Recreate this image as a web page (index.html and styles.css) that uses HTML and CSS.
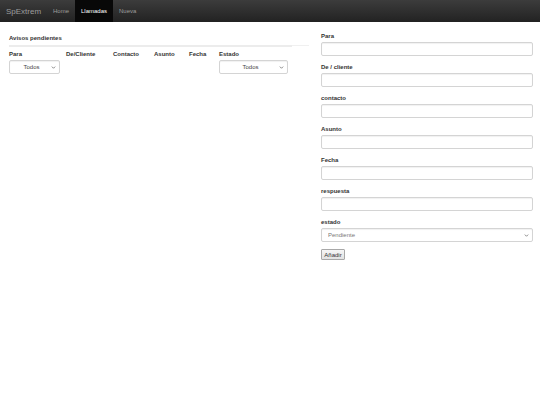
FILE: index.html
```html
<!DOCTYPE html>
<html lang="es">
<head>
<meta charset="utf-8">
<title>SpExtrem - Llamadas</title>
<link rel="stylesheet" href="styles.css">
</head>
<body>
<nav class="navbar">
  <span class="brand">SpExtrem</span>
  <ul class="nav">
    <li><a href="#">Home</a></li>
    <li class="active"><a href="#">Llamadas</a></li>
    <li><a href="#">Nueva</a></li>
  </ul>
</nav>
<main class="page">
  <section class="list">
    <div class="list-title">Avisos pendientes</div>
    <div class="rule"><span class="rule-strong"></span><span class="rule-light"></span></div>
    <div class="table">
      <div class="th">Para</div>
      <div class="th">De/Cliente</div>
      <div class="th">Contacto</div>
      <div class="th">Asunto</div>
      <div class="th">Fecha</div>
      <div class="th">Estado</div>
      <div class="td">
        <span class="select-wrap sw-para">
          <select class="select select-center"><option>Todos</option></select>
          <svg class="chev" viewBox="0 0 6 4" width="5" height="3"><path d="M0.8 0.8 L3 3 L5.2 0.8" fill="none" stroke="#555" stroke-width="0.9"/></svg>
        </span>
      </div>
      <div class="td"></div>
      <div class="td"></div>
      <div class="td"></div>
      <div class="td"></div>
      <div class="td">
        <span class="select-wrap sw-estado">
          <select class="select select-center"><option>Todos</option></select>
          <svg class="chev" viewBox="0 0 6 4" width="5" height="3"><path d="M0.8 0.8 L3 3 L5.2 0.8" fill="none" stroke="#555" stroke-width="0.9"/></svg>
        </span>
      </div>
    </div>
  </section>
  <form class="form">
    <div class="group"><label>Para</label><input class="input" type="text"></div>
    <div class="group"><label>De / cliente</label><input class="input" type="text"></div>
    <div class="group"><label>contacto</label><input class="input" type="text"></div>
    <div class="group"><label>Asunto</label><input class="input" type="text"></div>
    <div class="group"><label>Fecha</label><input class="input" type="text"></div>
    <div class="group"><label>respuesta</label><input class="input" type="text"></div>
    <div class="group"><label>estado</label>
      <span class="select-wrap sw-full">
        <select class="select select-left"><option>Pendiente</option></select>
        <svg class="chev" viewBox="0 0 6 4" width="5" height="3"><path d="M0.8 0.8 L3 3 L5.2 0.8" fill="none" stroke="#555" stroke-width="0.9"/></svg>
      </span>
    </div>
    <button class="btn" type="button">Añadir</button>
  </form>
</main>
</body>
</html>
```

FILE: styles.css
```css
* { box-sizing: border-box; }
html, body { margin: 0; padding: 0; background: #fff; }
body {
  font-family: "Liberation Sans", Arial, sans-serif;
  font-size: 6px;
  color: #333;
}
.navbar {
  display: flex;
  align-items: stretch;
  height: 22px;
  background: linear-gradient(#3c3c3c, #222);
}
.brand {
  display: flex;
  align-items: center;
  padding: 0 6px;
  font-size: 8px;
  color: #9d9d9d;
  width: 45px;
}
.nav {
  display: flex;
  list-style: none;
  margin: 0 0 0 2px;
  padding: 0;
}
.nav li { display: flex; }
.nav a {
  display: flex;
  align-items: center;
  padding: 0 6px;
  font-size: 6px;
  color: #9d9d9d;
  text-decoration: none;
}
.nav .active a {
  background: #080808;
  color: #fff;
}
.page {
  display: flex;
  align-items: flex-start;
}
.list {
  width: 309px;
  padding: 12px 0 0 9px;
}
.list-title {
  font-weight: bold;
  font-size: 6px;
  line-height: 8px;
  height: 8px;
}
.rule {
  display: flex;
  align-items: flex-start;
  margin-top: 3px;
  height: 2px;
}
.rule-strong { width: 283px; height: 2px; background: #ececec; }
.rule-light { flex: 1; height: 1px; background: #f0f0f0; }
.table {
  display: grid;
  grid-template-columns: 57px 47px 41px 35px 30px 80px;
  margin-top: 2px;
}
.th {
  font-weight: bold;
  line-height: 8px;
  height: 10px;
  padding-top: 1px;
}
.td { padding-top: 1px; }
.select-wrap {
  position: relative;
  display: block;
}
.sw-para { width: 51px; }
.sw-estado { width: 69px; }
.sw-full { width: 212px; }
.select {
  -webkit-appearance: none;
  appearance: none;
  display: block;
  width: 100%;
  height: 14px;
  margin: 0;
  padding: 0 8px 0 4px;
  border: 1px solid #d4d4d4;
  border-radius: 2px;
  background: #fff;
  font-family: "Liberation Sans", Arial, sans-serif;
  font-size: 6px;
  color: #444;
  box-shadow: inset 0 1px 1px rgba(0,0,0,0.06);
}
.select-center { text-align: center; text-align-last: center; padding-right: 10px; }
.select-left { padding-left: 6px; color: #777; }
.chev {
  position: absolute;
  right: 4px;
  top: 6px;
  pointer-events: none;
}
.form {
  width: 212px;
  margin-left: 12px;
  padding-top: 10px;
}
.group { margin-bottom: 7px; }
.group label {
  display: block;
  font-weight: bold;
  font-size: 6px;
  line-height: 8px;
  height: 8px;
  margin-bottom: 2px;
}
.input {
  display: block;
  width: 100%;
  height: 14px;
  margin: 0;
  padding: 0 4px;
  border: 1px solid #d4d4d4;
  border-radius: 2px;
  background: #fff;
  box-shadow: inset 0 1px 1px rgba(0,0,0,0.06);
  font-size: 6px;
}
.btn {
  display: block;
  height: 11px;
  width: 24px;
  padding: 0;
  margin: 0;
  border: 1px solid #a8a8a8;
  border-radius: 1px;
  background: linear-gradient(#f6f6f6, #e2e2e2);
  font-family: "Liberation Sans", Arial, sans-serif;
  font-size: 6px;
  color: #333;
}
```
